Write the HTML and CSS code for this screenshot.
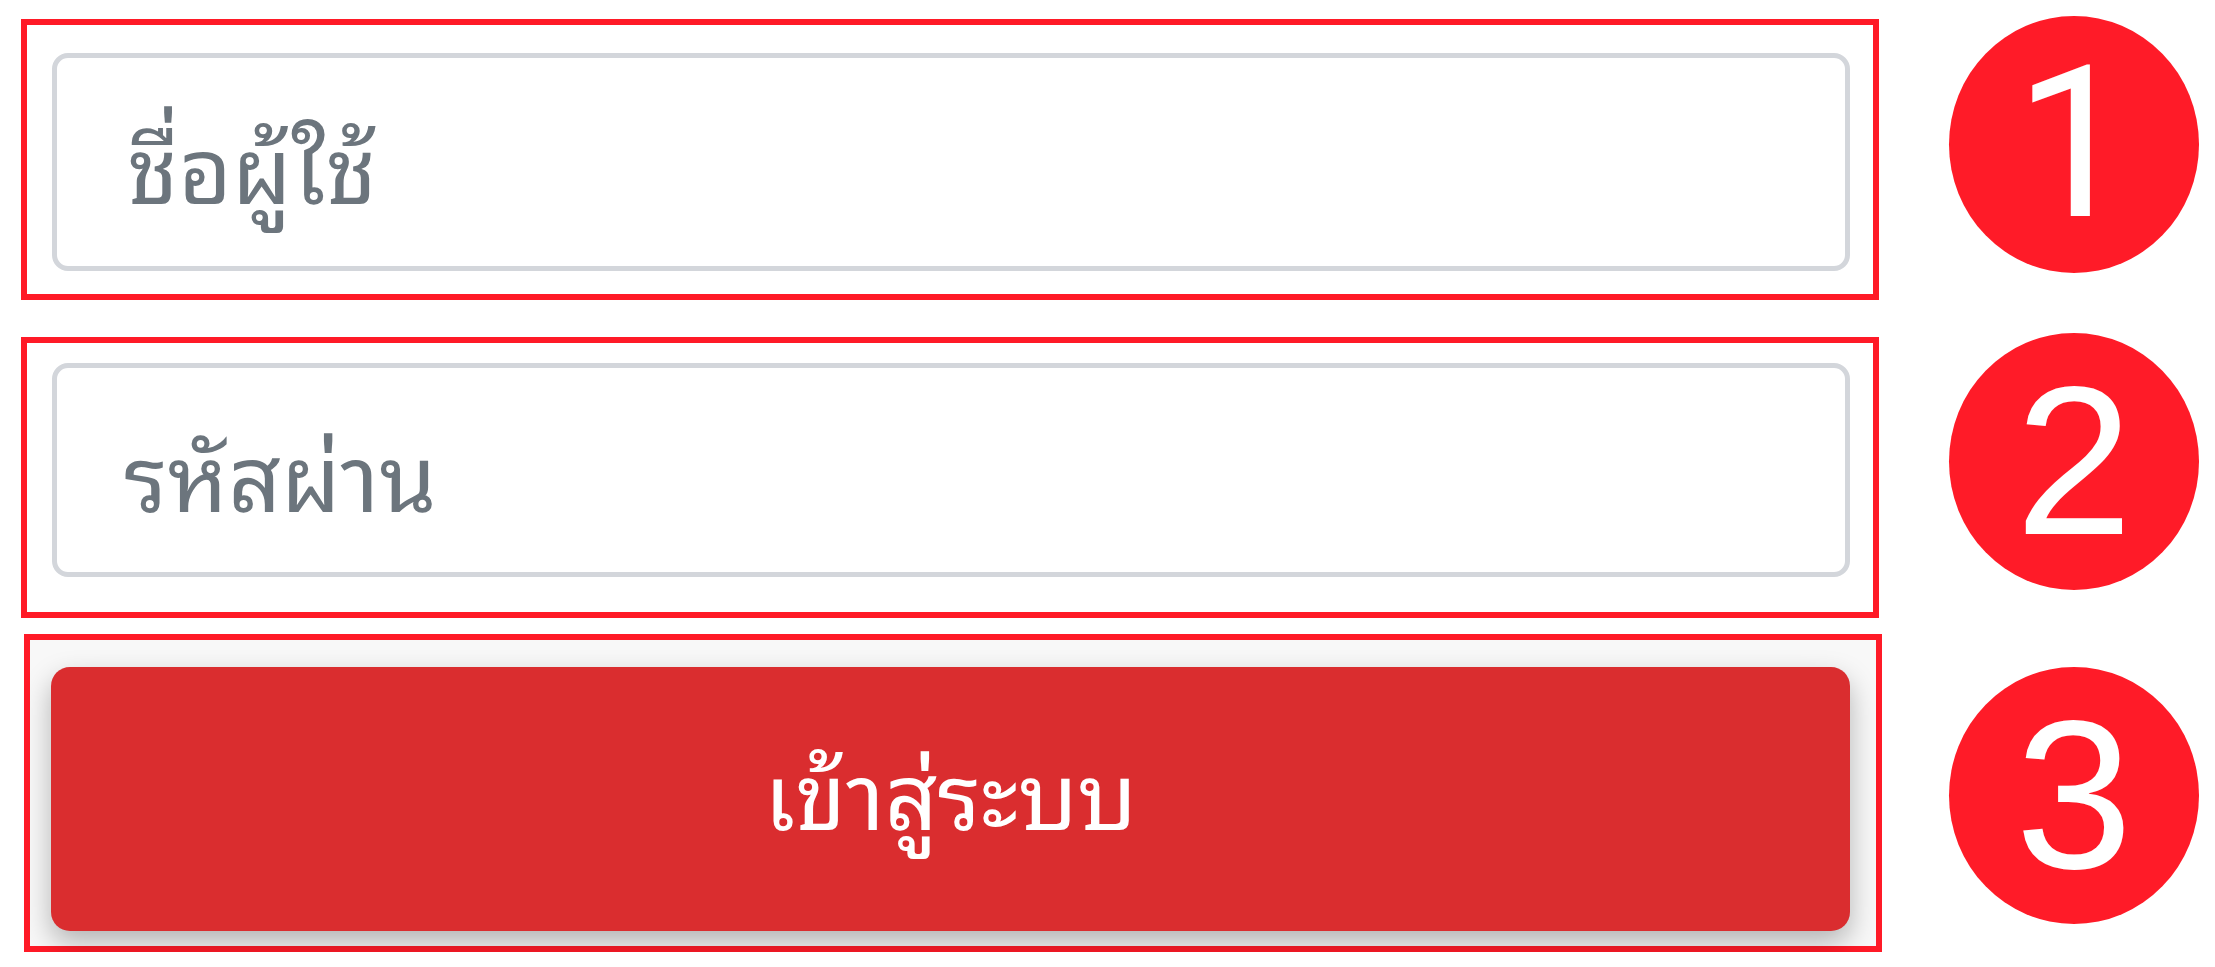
FILE: index.html
```html
<!DOCTYPE html>
<html lang="th">
<head>
<meta charset="utf-8">
<title>เข้าสู่ระบบ</title>
<link rel="stylesheet" href="styles.css">
</head>
<body>
<div class="page">
  <div class="row row-1">
    <div class="mark mark-1">
      <input class="field" type="text" placeholder="ชื่อผู้ใช้">
    </div>
    <div class="badge badge-1">1</div>
  </div>
  <div class="row row-2">
    <div class="mark mark-2">
      <input class="field" type="password" placeholder="รหัสผ่าน">
    </div>
    <div class="badge badge-2">2</div>
  </div>
  <div class="row row-3">
    <div class="mark mark-3">
      <button class="submit" type="button">เข้าสู่ระบบ</button>
    </div>
    <div class="badge badge-3">3</div>
  </div>
</div>
</body>
</html>
```
FILE: styles.css
```css
html, body {
  margin: 0;
  padding: 0;
  background: #ffffff;
}

body {
  font-family: "Noto Sans Thai Looped", "Liberation Sans", sans-serif;
  overflow: hidden;
}

.page {
  display: flex;
  flex-direction: column;
  padding-top: 16px;
  padding-left: 21px;
}

.row {
  display: flex;
  align-items: flex-start;
}

.row-2 { margin-top: 33px; }
.row-3 { margin-top: 16px; }

.mark {
  box-sizing: border-box;
  width: 1858px;
  border: 6px solid #ff1a27;
  background: #ffffff;
}

.mark-1 {
  margin-top: 3px;
  padding: 28px 23px 23px 25px;
}

.mark-2 {
  margin-top: 4px;
  padding: 20px 23px 35px 25px;
}

.mark-3 {
  margin-left: 3px;
  padding: 27px 26px 15px 21px;
  background: #f8f8f8;
}

.field {
  display: block;
  box-sizing: border-box;
  width: 100%;
  height: 218px;
  margin: 0;
  padding: 0 0 0 70px;
  border: 5px solid #d3d6db;
  border-radius: 16px;
  background: #ffffff;
  font-family: inherit;
  font-size: 92px;
  color: #495057;
  outline: none;
}

.mark-2 .field {
  height: 214px;
  padding-left: 67px;
}

.field::placeholder {
  color: #6c757d;
  opacity: 1;
}

.submit {
  display: block;
  box-sizing: border-box;
  width: 100%;
  height: 264px;
  margin: 0;
  padding: 0 0 22px 0;
  border: none;
  border-radius: 19px;
  background: #da2d2f;
  color: #ffffff;
  font-family: inherit;
  font-size: 92px;
  font-weight: normal;
  box-shadow: 0 12px 28px rgba(0, 0, 0, 0.28);
  cursor: pointer;
}

.badge {
  flex: none;
  width: 250px;
  height: 257px;
  border-radius: 50%;
  background: #ff1b28;
  color: #ffffff;
  font-family: "Liberation Sans", Arial, sans-serif;
  font-size: 211px;
  line-height: 257px;
  text-align: center;
}

.badge-1 {
  margin-left: 70px;
  font-family: Roboto, "Liberation Sans", sans-serif;
}
.badge-2 { margin-left: 70px; }
.badge-3 { margin-left: 67px; margin-top: 33px; }
```
